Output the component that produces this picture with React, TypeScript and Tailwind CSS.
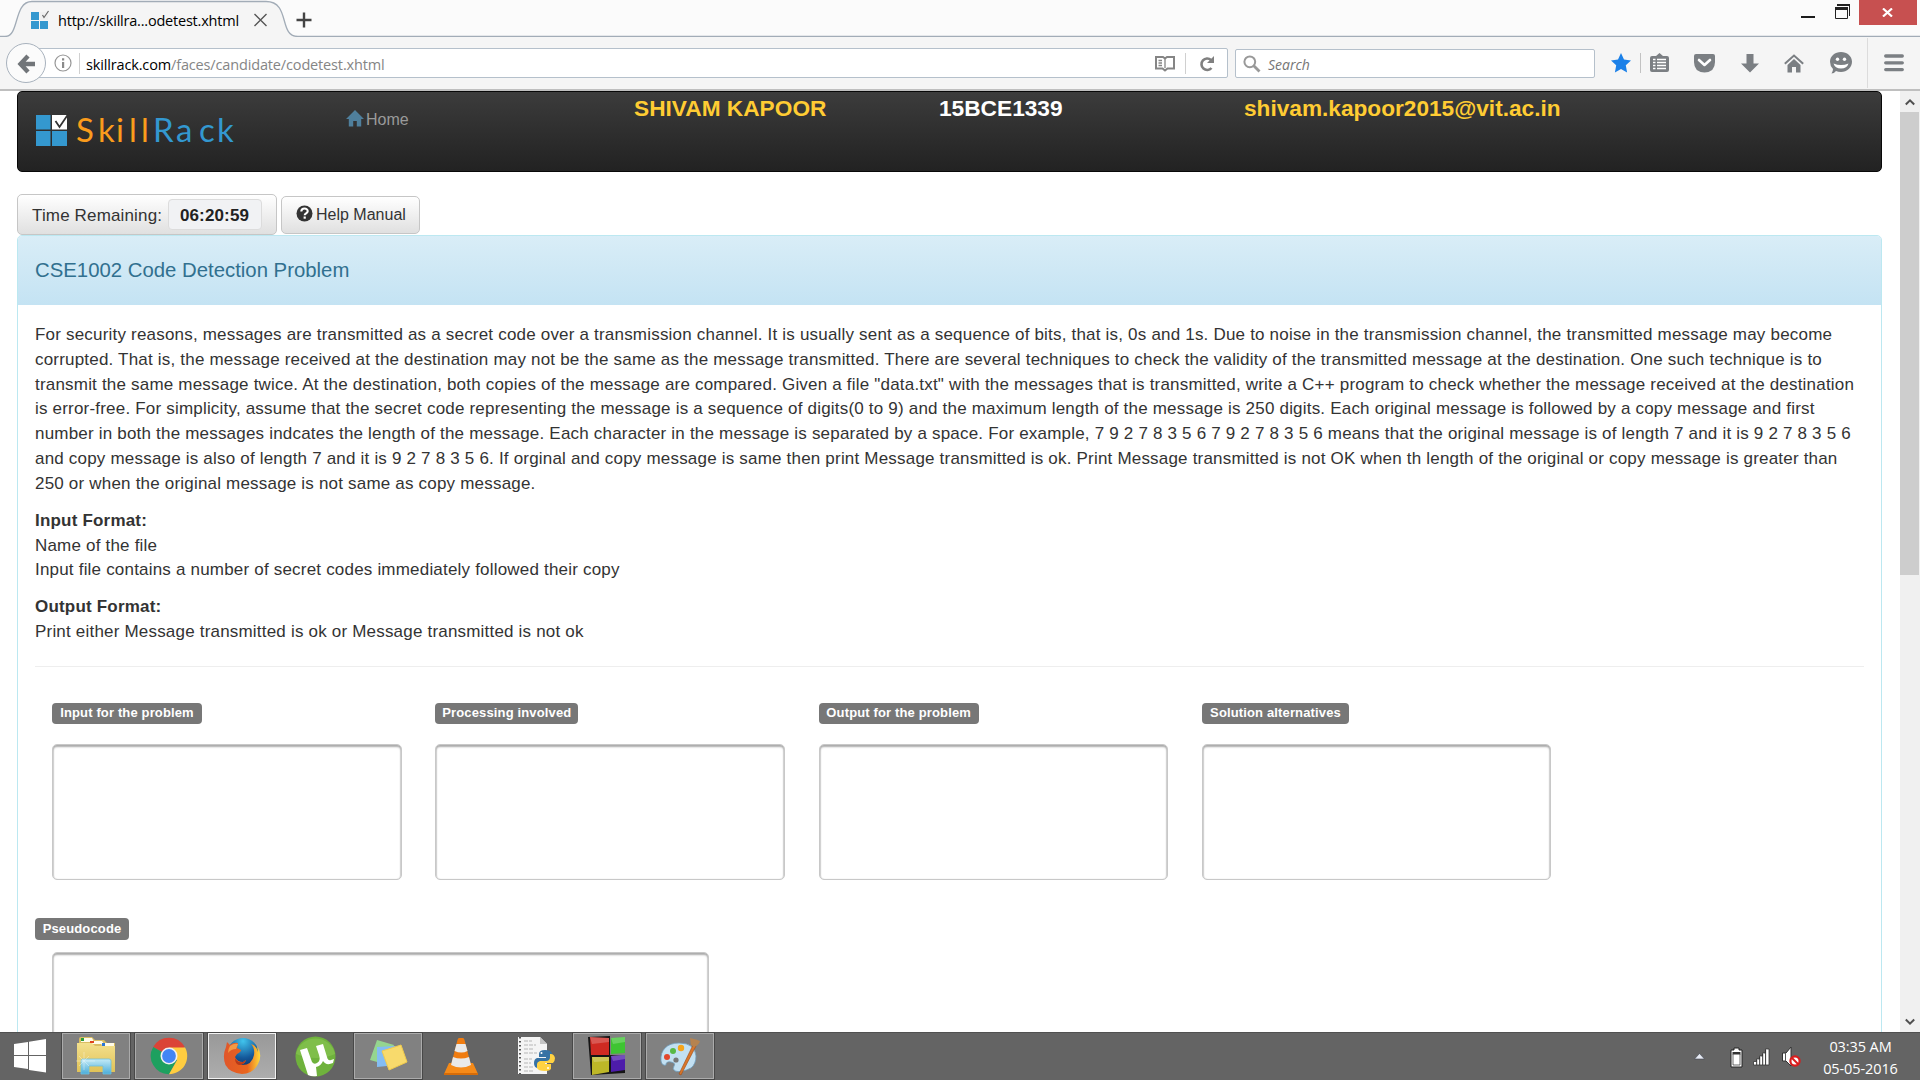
import React from "react";

const LINES: string[] = [
  "For security reasons, messages are transmitted as a secret code over a transmission channel. It is usually sent as a sequence of bits, that is, 0s and 1s. Due to noise in the transmission channel, the transmitted message may become",
  "corrupted. That is, the message received at the destination may not be the same as the message transmitted. There are several techniques to check the validity of the transmitted message at the destination. One such technique is to",
  "transmit the same message twice. At the destination, both copies of the message are compared. Given a file \"data.txt\" with the messages that is transmitted, write a C++ program to check whether the message received at the destination",
  "is error-free. For simplicity, assume that the secret code representing the message is a sequence of digits(0 to 9) and the maximum length of the message is 250 digits. Each original message is followed by a copy message and first",
  "number in both the messages indcates the length of the message. Each character in the message is separated by a space. For example, 7 9 2 7 8 3 5 6 7 9 2 7 8 3 5 6 means that the original message is of length 7 and it is 9 2 7 8 3 5 6",
  "and copy message is also of length 7 and it is 9 2 7 8 3 5 6. If orginal and copy message is same then print Message transmitted is ok. Print Message transmitted is not OK when th length of the original or copy message is greater than",
  "250 or when the original message is not same as copy message.",
];

const FIELDS = [
  { label: "Input for the problem", w: "w-[150px]" },
  { label: "Processing involved", w: "w-[143px]" },
  { label: "Output for the problem", w: "w-[160px]" },
  { label: "Solution alternatives", w: "w-[147px]" },
];

const ui = "font-['Open_Sans','Noto_Sans',sans-serif]";

function TabStrip() {
  return (
    <div className="relative h-[37px] shrink-0 bg-[#fbfbfb]">
      <svg className="absolute left-0 top-0" width="1920" height="37" viewBox="0 0 1920 37" fill="none">
        <path d="M0 36.5H5C20 36.5 13 1.5 32 1.5H266C291 1.5 278 36.5 298 36.5V37H0Z" fill="#f5f5f5" />
        <path d="M0 36.5H5C20 36.5 13 1.5 32 1.5H266C291 1.5 278 36.5 298 36.5H1920" stroke="#a2acb7" strokeWidth="1.3" />
      </svg>
      <div className="relative flex h-full items-start">
        <svg className="ml-[30px] mt-[10px] shrink-0" width="20" height="20" viewBox="0 0 20 20">
          <path d="M1 2h8v8H1zM1 11h8v8H1zM10 11h8v8h-8z" fill="#3498cf" />
          <path d="M10 2h8v8h-8z" fill="#f0f0f0" />
          <path d="M12.500 5l1.500 2.500 4.500-6.500" stroke="#666" strokeWidth="1.2" fill="none" />
        </svg>
        <span className={`ml-[8px] mt-[11px] w-[182px] whitespace-nowrap text-[14.5px] leading-[20px] tracking-[-0.21px] text-black ${ui}`}>http://skillra...odetest.xhtml</span>
        <svg className="ml-[13px] mt-[13px]" width="15" height="14" viewBox="0 0 15 14"><path d="M1.500 1l12 12M13.500 1l-12 12" stroke="#555" strokeWidth="1.400" /></svg>
        <svg className="ml-[28px] mt-[12px]" width="16" height="16" viewBox="0 0 16 16"><path d="M8 .5v15M.5 8h15" stroke="#444" strokeWidth="2.400" /></svg>
        <div className="ml-auto flex items-start">
          <div className="mr-[20px] mt-[16px] h-[2px] w-[14px] bg-[#1c1c1c]" />
          <svg className="mr-[9px] mt-[4px]" width="15" height="15" viewBox="0 0 15 15"><path d="M.5 5h12v9.500H.5z" fill="none" stroke="#222" /><path d="M0 3h13v3H0zM2 0h13v12h-1V2H2z" fill="#222" /></svg>
          <div className="mr-[3px] flex h-[25px] w-[58px] items-center justify-center bg-[#c75050] pb-px pr-px">
            <svg width="11" height="9" viewBox="0 0 11 9"><path d="M1 .5l9 8M10 .5l-9 8" stroke="#fff" strokeWidth="2.200" /></svg>
          </div>
        </div>
      </div>
    </div>
  );
}

function Toolbar() {
  return (
    <div className="relative flex h-[54px] shrink-0 items-start border-b-2 border-[#bfbfbf] bg-[#f5f5f5]">
      <div className="relative z-10 ml-[6px] mt-[6px] flex h-[40px] w-[40px] shrink-0 items-center justify-center rounded-full border border-[#a8b2bd] bg-[#fbfbfb]">
        <svg className="mt-px" width="18" height="20" viewBox="0 0 18 20"><path d="M11 2L3.500 10l7.500 8M4 10h14" stroke="#717579" strokeWidth="4.400" fill="none" /></svg>
      </div>
      <div className="-ml-[8px] mt-[11px] flex h-[30px] w-[1190px] items-center rounded-r-[2px] border border-[#b5c0cb] bg-white">
        <svg className="ml-[15px] shrink-0" width="18" height="18" viewBox="0 0 18 18"><circle cx="9" cy="9" r="8" fill="none" stroke="#969696" strokeWidth="1.200" /><path d="M8 8h2.200v6H8zM8 4.200h2.200v2.200H8z" fill="#8a8a8a" /></svg>
        <div className="ml-[7px] h-[21px] w-px bg-[#d0d0d0]" />
        <span className={`ml-[6px] mt-[3px] whitespace-nowrap text-[14.5px] leading-[20px] tracking-[-0.15px] text-black ${ui}`}>skillrack.com<span className="text-[#858585]">/faces/candidate/codetest.xhtml</span></span>
        <svg className="ml-auto" width="20" height="17" viewBox="0 0 20 17"><path d="M1 2h7l2 1.500L12 2h7v11.500h-6.500L10 15.500l-2.500-2H1z" fill="none" stroke="#858585" strokeWidth="2" /><path d="M10 3v10M3.500 5.500H7M3.500 8H7M3.500 10.500H7" stroke="#858585" strokeWidth="1.300" /></svg>
        <div className="ml-[10px] h-[21px] w-px bg-[#d0d0d0]" />
        <svg className="ml-[13px] mr-[12px] mt-px" width="16" height="16" viewBox="0 0 16 16"><path d="M12.500 12A5.700 5.700 0 1 1 12 4" stroke="#808080" strokeWidth="2.600" fill="none" /><path d="M15 0v7H8z" fill="#808080" /></svg>
      </div>
      <div className="ml-[7px] mt-[12px] flex h-[29px] w-[360px] items-center rounded-[2px] border border-[#b5c0cb] bg-white">
        <svg className="ml-[7px]" width="18" height="18" viewBox="0 0 18 18"><circle cx="6.800" cy="6.800" r="5.400" fill="none" stroke="#999" strokeWidth="2" /><path d="M10.500 10.500l6 6" stroke="#999" strokeWidth="2.800" /></svg>
        <span className={`ml-[7px] mt-[2px] text-[14px] italic leading-[20px] text-[#757575] ${ui}`}>Search</span>
      </div>
      <div className="flex h-full flex-1 items-start text-[#7b7f83]">
        <svg className="ml-[16px] mt-[16px]" width="20" height="20" viewBox="0 0 20 20"><path d="M10 0l3 6.500 7 .9-5.200 4.900 1.300 7.200L10 16.100l-6.100 3.400 1.300-7.200L0 7.400l7-.9z" fill="#1b80e8" /></svg>
        <div className="ml-[9px] mt-[16px] h-[20px] w-px bg-[#c2c2c2]" />
        <svg className="ml-[9px] mt-[16px]" width="19" height="20" viewBox="0 0 19 20"><path d="M6 3l3.500-3L13 3h4q2 0 2 2v12q0 2-2 2H2q-2 0-2-2V5q0-2 2-2z" fill="currentColor" /><path d="M3 6.500h2.500M7 6.500h9M3 9.500h2.500M7 9.500h9M3 12.500h2.500M7 12.500h9M3 15.500h2.500M7 15.500h9" stroke="#fff" strokeWidth="1.500" /></svg>
        <svg className="ml-[25px] mt-[17px]" width="21" height="19" viewBox="0 0 21 19"><path d="M2 0h17q2 0 2 2v6q0 10-10.500 10.500Q0 18 0 8V2q0-2 2-2z" fill="currentColor" /><path d="M5 6l5.500 5L16 6" stroke="#fff" strokeWidth="2.600" fill="none" strokeLinecap="round" strokeLinejoin="round" /></svg>
        <svg className="ml-[26px] mt-[17px]" width="18" height="19" viewBox="0 0 18 19"><path d="M5.500 0h7v9.500H18L9 18.500 0 9.500h5.500z" fill="currentColor" /></svg>
        <svg className="ml-[25px] mt-[17px]" width="20" height="19" viewBox="0 0 20 19"><path d="M.8 9.800L10 1.500l9.200 8.300" stroke="currentColor" strokeWidth="2" fill="none" /><path d="M10 5l6.500 6v7.500h-4.500V13H8v5.500H3.500V11z" fill="currentColor" /></svg>
        <svg className="ml-[26px] mt-[15px]" width="22" height="22" viewBox="0 0 22 22"><path d="M11 0c6 0 11 4 11 9.700S17 20 11 20q-3 0-5-1-2 2.500-4.500 2.500Q3 19.500 3 17 0 14 0 9.700C0 4 5 0 11 0z" fill="currentColor" /><circle cx="7.500" cy="7.200" r="1.700" fill="#fff" /><circle cx="14.500" cy="7.200" r="1.700" fill="#fff" /><path d="M3.500 11.500q7.500 3 15 0Q17 16.500 11 16.500T3.500 11.500z" fill="#fff" /></svg>
        <div className="ml-[15px] mt-px h-[50px] w-px bg-[#dcdcdc]" />
        <svg className="ml-[16px] mt-[17px]" width="20" height="18" viewBox="0 0 20 18"><path d="M1.700 2h16.600M1.700 8.800h16.600M1.700 15.600h16.600" stroke="currentColor" strokeWidth="3.300" strokeLinecap="round" /></svg>
      </div>
    </div>
  );
}

function Navbar() {
  return (
    <div className="flex h-[81px] w-[1865px] items-start rounded-[5px] border border-[#080808] bg-gradient-to-b from-[#3c3c3c] to-[#222] font-bold">
      <div className="ml-[18px] mt-[19px] flex items-start font-['Lato',sans-serif] text-[33px] font-normal leading-[40px]">
        <svg width="36" height="36" viewBox="0 0 36 36" className="shrink-0">
          <path d="M0 4h14.500v14.500H0zM0 20h14.500v15H0zM16 20h15v15H16z" fill="#3498cf" />
          <path d="M16 4h15v14.500H16z" fill="#fff" />
          <path d="M19.500 10l4 6L33 2" stroke="#333" strokeWidth="1.800" fill="none" />
        </svg>
        <div className="-mt-[2px] ml-[4px] flex text-[#fb9c1c]">
          <span className="w-[22px]">S</span><span className="w-[18px]">k</span><span className="w-[13px]">i</span><span className="w-[12px]">l</span><span className="w-[12px]">l</span>
          <span className="w-[23px] text-[#3398d0]">R</span><span className="w-[23px] text-[#3398d0]">a</span><span className="w-[18px] text-[#3398d0]">c</span><span className="text-[#3398d0]">k</span>
        </div>
      </div>
      <div className="ml-auto flex w-[1535px] items-start">
        <svg className="mt-[18px] shrink-0" width="18" height="17" viewBox="0 0 18 17"><path d="M9 0l9 9h-2.800v7.500h-4.400V11H7.200v5.500H2.800V9H0z" fill="#4f7f9c" /></svg>
        <span className="ml-[2px] mt-[15px] w-[268px] text-[16px] font-normal leading-[26px] text-[#9a9a9a]">Home</span>
        <span className="mt-[2px] w-[305px] whitespace-nowrap text-[22.7px] leading-[28px] text-[#ffcc33]">SHIVAM KAPOOR</span>
        <span className="mt-[2px] w-[305px] text-[22.7px] leading-[28px] text-white">15BCE1339</span>
        <span className="mt-[2px] text-[22.65px] leading-[28px] text-[#ffcc33]">shivam.kapoor2015@vit.ac.in</span>
      </div>
    </div>
  );
}

const box = "rounded-[5px] border border-[#c8c8c8] bg-white shadow-[inset_0_2px_2px_#aaa,inset_1px_0_1px_#ddd,inset_-1px_0_1px_#ddd]";
const tag = "flex items-center justify-center whitespace-nowrap rounded-[4px] bg-[#777] text-[13px] tracking-[0.14px] font-bold text-white";

function Page() {
  return (
    <div className="h-full flex-1 overflow-hidden bg-white pl-[17px]">
      <Navbar />
      <div className="mt-[22px] flex h-[41px] items-center gap-[4px] text-[#333]">
        <div className="flex h-[41px] w-[260px] items-center rounded-[5px] border border-[#c6c6c6] bg-gradient-to-b from-white to-[#e0e0e0] pl-[14px] text-[17px]">
          <span className="mt-[2px] w-[136px] whitespace-nowrap tracking-[0.15px]">Time Remaining:</span>
          <div className="flex h-[31px] w-[94px] items-center justify-center rounded-[4px] border border-[#dcdcdc] bg-[#f1f2f4] pr-px pt-[2px] font-bold tracking-[0.15px] text-[#222]">06:20:59</div>
        </div>
        <div className="flex h-[38px] w-[139px] items-center rounded-[5px] border border-[#c6c6c6] bg-gradient-to-b from-white to-[#e0e0e0] pl-[14px] text-[16px]">
          <svg className="-mt-[3px]" width="17" height="17" viewBox="0 0 17 17"><circle cx="8.500" cy="8.500" r="8" fill="#333" /><path d="M5.300 6.500C5.400 2.500 11.800 2.700 11.700 6.300c0 2-3 2.200-3 4" stroke="#fff" strokeWidth="2.100" fill="none" /><path d="M7.600 11.500h2.200v2.200H7.600z" fill="#fff" /></svg>
          <span className="ml-[3px] whitespace-nowrap">Help Manual</span>
        </div>
      </div>
      <div className="h-[900px] w-[1865px] rounded-t-[5px] border border-[#bce8f1] bg-white">
        <div className="flex h-[69px] items-center rounded-t-[4px] bg-gradient-to-b from-[#d9edf7] to-[#c4e3f3] pl-[17px] text-[20.35px] text-[#31708f]">CSE1002 Code Detection Problem</div>
        <div className="pl-[17px] pt-[18px] text-[17px] leading-[24.83px] tracking-[0.196px] text-[#333]">
          <div className="mb-[12px]">
            {LINES.map((text) => <p key={text} className="w-max whitespace-nowrap">{text}</p>)}
          </div>
          <div className="mb-[12px]">
            <p className="font-bold">Input Format:</p>
            <p>Name of the file</p>
            <p>Input file contains a number of secret codes immediately followed their copy</p>
          </div>
          <div>
            <p className="font-bold">Output Format:</p>
            <p>Print either Message transmitted is ok or Message transmitted is not ok</p>
          </div>
        </div>
        <div className="ml-[17px] mt-[21px] h-px w-[1829px] bg-[#eee]" />
        <div className="ml-[34px] mt-[36px] flex">
          {FIELDS.map((f) => (
            <div key={f.label} className="w-[383.330px] shrink-0">
              <div className={`${tag} h-[21px] pb-[2px] ${f.w}`}>{f.label}</div>
              <div className={`${box} mt-[20px] h-[136px] w-[349.500px]`} />
            </div>
          ))}
        </div>
        <div className={`${tag} ml-[17px] mt-[38px] h-[22px] w-[94px]`}>Pseudocode</div>
        <div className={`${box} ml-[34px] mt-[12px] h-[150px] w-[657px]`} />
      </div>
    </div>
  );
}

function Scrollbar() {
  return (
    <div className="flex h-full w-[20px] shrink-0 flex-col bg-[#f0f0f0] pr-px">
      <div className="flex h-[21px] items-center justify-center"><svg width="10" height="8" viewBox="0 0 10 8"><path d="M.8 6.500L5 2.300l4.200 4.200" stroke="#505050" strokeWidth="2" fill="none" /></svg></div>
      <div className="h-[463px] bg-[#cdcdcd]" />
      <div className="mt-auto flex h-[21px] items-center justify-center"><svg width="10" height="8" viewBox="0 0 10 8"><path d="M.8 1.500L5 5.700l4.200-4.200" stroke="#505050" strokeWidth="2" fill="none" /></svg></div>
    </div>
  );
}

const Explorer = () => (
  <svg width="40" height="40" viewBox="0 0 40 40">
    <defs><linearGradient id="fold" x2="0" y2="1"><stop stopColor="#f3e08d" /><stop offset="1" stopColor="#e0c258" /></linearGradient><linearGradient id="tray" x2="0" y2="1"><stop stopColor="#c4ebf7" /><stop offset="1" stopColor="#4bacd8" /></linearGradient></defs>
    <path d="M3 3q0-2 2-2h11l3 3h9l3 3h8v29H1V9l2-2z" fill="#d9bd62" />
    <path d="M5 2h11l2 4H5zM14 5h12l2 3H15zM25 7h13v3H26z" fill="#fffbe9" />
    <path d="M5 2h3v3H5z" fill="#2a9d3a" /><path d="M14 5h4v2h-4z" fill="#e0431d" /><path d="M26 7h3v3h-3z" fill="#2a77d8" />
    <path d="M1 7h15l3 3h20v25q0 1-1 1H2q-1 0-1-1z" fill="url(#fold)" />
    <path d="M5 38V25q0-2 2-2h26q2 0 2 2v13h-8v-8H13v8z" fill="url(#tray)" stroke="#6cc0df" strokeWidth=".8" />
    <path d="M8 16v18M-1 25h20M3 20l10 10M13 20L3 30" stroke="#fff" strokeWidth=".7" opacity=".5" />
  </svg>
);
const Chrome = () => (
  <svg width="38" height="38" viewBox="0 0 38 38">
    <path d="M19 19L3.200 9.900A18.200 18.200 0 0 1 34.800 9.900z" fill="#db4437" />
    <path d="M19 19L3.200 9.900A18.200 18.200 0 0 0 19 37.200L27 23z" fill="#1da05f" />
    <path d="M19 10.500h16.100A18.200 18.200 0 0 1 19 37.200l8-14z" fill="#ffcd40" />
    <circle cx="19" cy="19" r="8.500" fill="#f1f1f1" /><circle cx="19" cy="19" r="6.900" fill="#4285f4" />
  </svg>
);
const Firefox = () => (
  <svg className="-ml-px" width="38" height="38" viewBox="0 0 38 38">
    <defs>
      <radialGradient id="globe" cx=".5" cy=".1" r=".9"><stop stopColor="#41c4ed" /><stop offset=".6" stopColor="#14599b" /><stop offset="1" stopColor="#0b2c5e" /></radialGradient>
      <linearGradient id="fox" x2="1" y2="0"><stop stopColor="#e0562a" /><stop offset=".65" stopColor="#e9661d" /><stop offset="1" stopColor="#ffdc3a" /></linearGradient>
    </defs>
    <circle cx="20" cy="16.500" r="15.500" fill="url(#globe)" />
    <path d="M3 10l1-5 3 3q4-3 8-2l-1 5 4 2q0 2-4 4l-2 3q2 5 8 5l3-2q-1 4-6 5 12 1 14-10 1-7-3-11 6 2 7 8l-1-6q6 9 1 18-5 10-16 10Q7 36 2.500 28-1 19 3 10z" fill="url(#fox)" />
    <path d="M7 9q4-3 8-2l-2 5q-5 0-8 4 0-4 2-7z" fill="#f39a45" />
    <path d="M12 21q2 5 8 4l3-2q-2 5-7 5-4-1-4-7z" fill="#b8391a" />
  </svg>
);
const UTorrent = () => (
  <svg width="41" height="41" viewBox="0 0 41 41"><circle cx="20.500" cy="20.500" r="20" fill="#6fb23c" /><path d="M1 18a20 20 0 0 1 39 0q-18 8-39 0z" fill="#8bc653" opacity=".6" /><path d="M5 14l7-2 5 14q2 3 5 1 4-2 2-8l-3-9 7-2 4 13q1 4 4 3l3-1-1 4q-7 3-10-2-2 5-7 6l1 9q-5 1-9-1z" fill="#fff" /></svg>
);
const Notes = () => (
  <svg width="40" height="34" viewBox="0 0 40 34"><path d="M9 1l17 5-6 20L2 21z" fill="#95d58f" /><path d="M9 8l18-1 2 19-20 2z" fill="#84bdf2" /><path d="M14 12l19-6 6 17-18 8z" fill="#f8da6c" stroke="#f1cb4c" /></svg>
);
const Vlc = () => (
  <svg width="36" height="39" viewBox="0 0 36 39"><path d="M6 26h24l5 11q0 1-1 1H2q-1 0-1-1z" fill="#f58a18" /><path d="M1 36h34v2H1z" fill="#d66c08" /><path d="M16 1h4q1 0 1.500 2L28 28q-10 5-20 0L14.500 3Q15 1 16 1z" fill="#f07c10" /><path d="M13.500 7h9l2 7q-6 3-13 0zM10 20q8 3 16 0l2 8q-10 5-20 0z" fill="#e9e9e9" /></svg>
);
const Python = () => (
  <svg className="ml-[3px]" width="40" height="40" viewBox="0 0 40 40"><path d="M2 1h22l7 7v30H2z" fill="#f4f4f4" /><path d="M24 1v7h7z" fill="#c4c4c4" /><path d="M4 1v37" stroke="#555" strokeWidth="2" strokeDasharray="1.500 2.500" /><path d="M8 5h8M8 9h12M8 13h10M8 17h13M8 23h8M8 27h7M8 31h10M8 35h9" stroke="#b5b5b5" strokeWidth="1.200" strokeDasharray="4 1" />
    <path d="M29 14q-6 0-6 4v3h7v1H21q-3 1-3 5 0 5 4 5h2v-3q0-3 4-3h6q2 0 2-3v-5q0-4-7-4z" fill="#3772a4" /><path d="M29 34q7 0 6-4v-3h-6v-1h8q2-2 2-5-1-4-4-4h-1v3q0 4-4 4h-6q-3 1-3 3v4q1 3 8 3z" transform="translate(0 1)" fill="#ffd242" /><circle cx="25.500" cy="17" r="1" fill="#fff" /><circle cx="32" cy="32" r="1" fill="#fff" /></svg>
);
const Blocks = () => (
  <svg width="38" height="40" viewBox="0 0 38 40"><path d="M0 1l22-1v19l15 1v17l-34 2z" fill="#151515" /><path d="M2 1l19 1v17L3 19z" fill="#cf2a22" /><path d="M23 2l14-1v16l-14 1z" fill="#3ec432" /><path d="M4 21h17v15L4 39z" fill="#bdb728" /><path d="M23 20l14-1v15l-14 2z" fill="#4d1caa" /><path d="M2 1l19 1v4L4 8zM23 2l14-1v5l-12 2zM4 21h17v4L6 26zM23 20l14-1v4l-12 2z" fill="#fff" opacity=".22" /></svg>
);
const Paint = () => (
  <svg width="42" height="40" viewBox="0 0 42 40"><path d="M20 7q16 0 17 13 0 8-5 12-10 5-16 3-3-2-1-5t-3-4-5 3q-4 1-5-4C1 14 8 7 20 7z" fill="#c2e0f2" stroke="#6e9cba" strokeWidth=".8" /><circle cx="17" cy="24" r="2.600" fill="#777" /><circle cx="8" cy="21" r="3" fill="#e2472d" /><circle cx="14" cy="15" r="3" fill="#58b947" /><circle cx="22" cy="12" r="3.200" fill="#f6a51b" /><path d="M34 9l3 1-15 29-2-1z" fill="#d9762b" stroke="#9c4c16" strokeWidth=".6" /><path d="M31 2q5 1 10 3-1 4-6 6l-3-2z" fill="#b58350" /></svg>
);

const OPEN = "border border-[#ababab] bg-[#818181] outline outline-[#484848]";
const ACTIVE = "border border-[#f2f2f2] bg-gradient-to-b from-[#999] to-[#adadad] outline outline-[#484848]";

const APPS: { icon: () => React.JSX.Element; style: string }[] = [
  { icon: Explorer, style: OPEN },
  { icon: Chrome, style: OPEN },
  { icon: Firefox, style: ACTIVE },
  { icon: UTorrent, style: "" },
  { icon: Notes, style: OPEN },
  { icon: Vlc, style: "" },
  { icon: Python, style: "" },
  { icon: Blocks, style: OPEN },
  { icon: Paint, style: OPEN },
];

function Taskbar() {
  return (
    <div className="flex h-[48px] shrink-0 items-start border-t border-[#505050] bg-[#646464]">
      <svg className="ml-[14px] mt-[6px] shrink-0" width="32" height="34" viewBox="0 0 32 34"><path d="M0 5l14-2v13H0zM15 2.800L32 0v16H15zM0 17h14v13L0 28zM15 17h17v16.500l-17-2.500z" fill="#fff" /></svg>
      <div className="ml-[16px] flex gap-[5px]">
        {APPS.map(({ icon: Icon, style }, i) => (
          <div key={i} className={`flex h-[46px] w-[68px] items-center justify-center ${style}`}><Icon /></div>
        ))}
      </div>
      <div className="ml-auto flex h-full items-start">
        <svg className="mt-[20px]" width="11" height="7" viewBox="0 0 11 7"><path d="M5.500 .5l5 5.500H.5z" fill="#e8ecf5" stroke="#404550" strokeWidth=".6" /></svg>
        <svg className="ml-[25px] mt-[14px]" width="13" height="21" viewBox="0 0 13 21"><path d="M4 1h5v2h3v17H1V3h3z" fill="#fff" stroke="#222" /><path d="M2.500 5h8v2.500h-8z" fill="#333" /><path d="M3 7v11h7V7" fill="none" stroke="#444" strokeWidth=".8" /></svg>
        <svg className="ml-[10px] mt-[15px]" width="17" height="18" viewBox="0 0 17 18"><path d="M.5 13.500h3V11h3V8h3V5h3V1h3.500v16H.5z" fill="#fff" stroke="#333" strokeWidth=".8" /><path d="M3.700 12v5M6.700 9v8M9.700 6v11M12.600 2v15" stroke="#333" /></svg>
        <svg className="ml-[12px] mt-[13px]" width="20" height="22" viewBox="0 0 20 22"><path d="M.5 7H4l5-6v19l-5-5H.5z" fill="#fff" stroke="#333" /><path d="M3.500 7v8" stroke="#555" /><circle cx="13" cy="15" r="4.600" fill="#fff" stroke="#d91d1d" strokeWidth="2.200" /><path d="M10 12l6 6" stroke="#d91d1d" strokeWidth="2" /></svg>
        <div className={`ml-[19px] mr-[20px] mt-[3px] w-[79px] whitespace-nowrap text-center text-[14.500px] leading-[22px] tracking-[-0.1px] text-white ${ui}`}>
          <div>03:35 AM</div>
          <div>05-05-2016</div>
        </div>
      </div>
    </div>
  );
}

export default function App() {
  return (
    <div className="flex h-[1080px] w-[1920px] flex-col overflow-hidden bg-white font-['Liberation_Sans',Arial,sans-serif]">
      <TabStrip />
      <Toolbar />
      <div className="flex min-h-0 flex-1">
        <Page />
        <Scrollbar />
      </div>
      <Taskbar />
    </div>
  );
}
